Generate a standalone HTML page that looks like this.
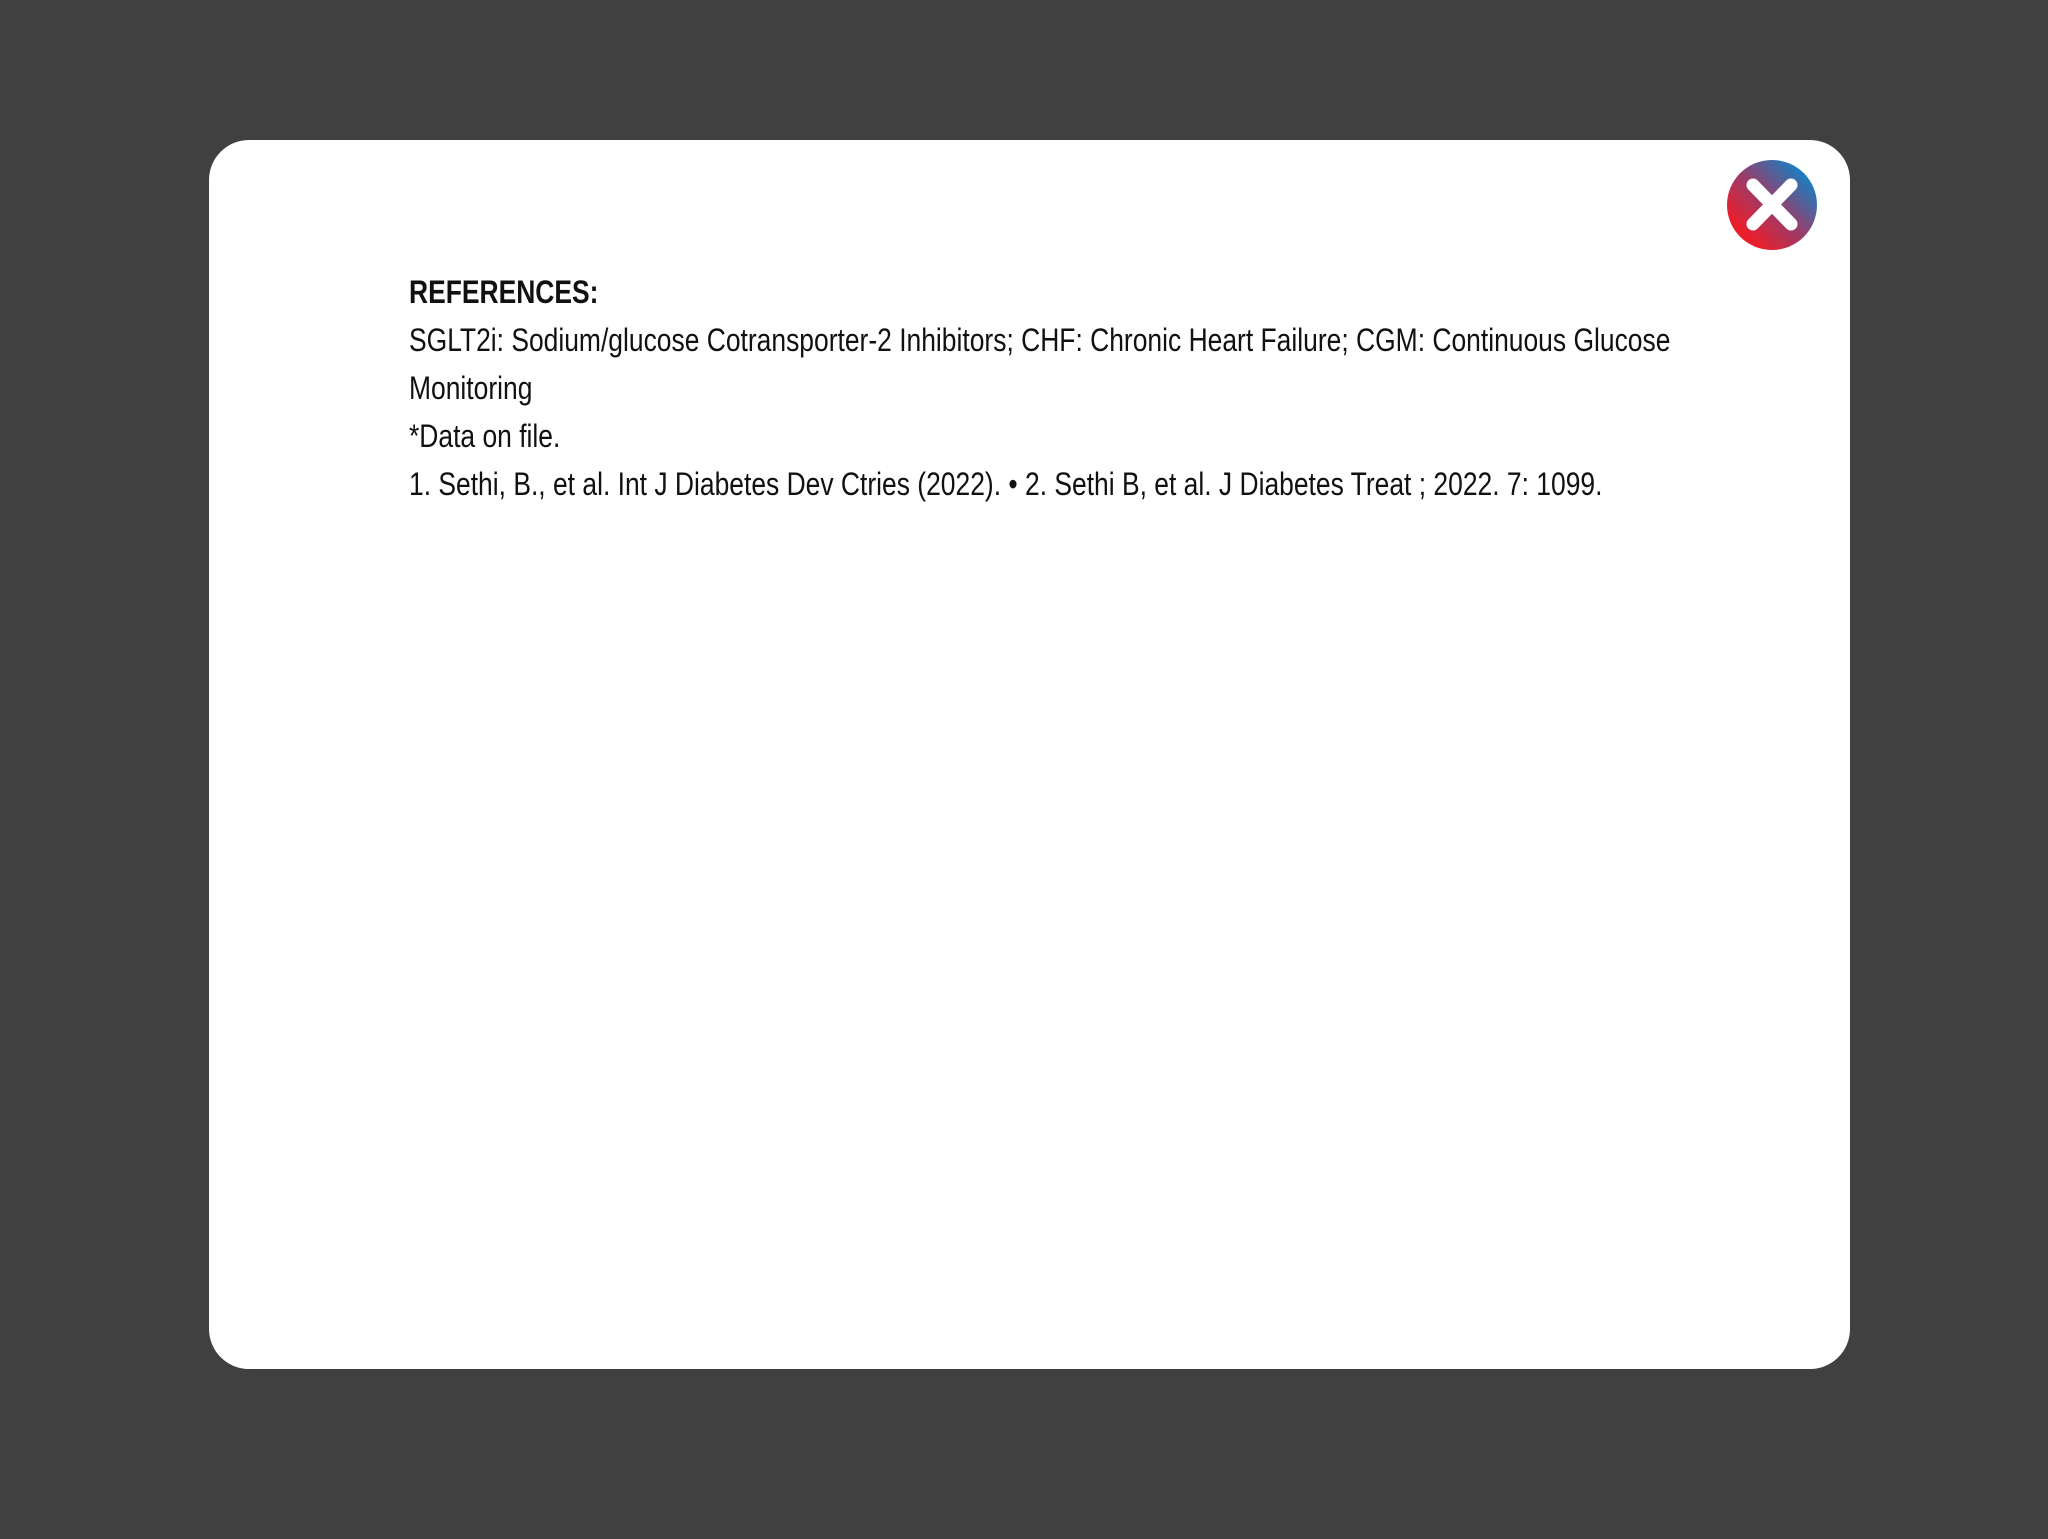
<!DOCTYPE html>
<html><head><meta charset="utf-8"><style>
html,body{margin:0;padding:0;}
body{width:2048px;height:1539px;background:#404040;position:relative;overflow:hidden;font-family:"Liberation Sans Narrow","Liberation Sans",sans-serif;}
.modal{position:absolute;left:209px;top:140px;width:1641px;height:1229px;background:#fff;border-radius:40px;}
.txt{position:absolute;left:409px;top:268px;width:1540px;transform:scaleX(0.826);transform-origin:0 0;font-size:32px;line-height:48px;color:#111;white-space:nowrap;}
.txt b{font-weight:bold;}
svg{position:absolute;left:1726px;top:159px;}
</style></head><body>
<div class="modal"></div>
<div class="txt"><b>REFERENCES:</b><br>SGLT2i: Sodium/glucose Cotransporter-2 Inhibitors; CHF: Chronic Heart Failure; CGM: Continuous Glucose<br>Monitoring<br>*Data on file.<br>1. Sethi, B., et al. Int J Diabetes Dev Ctries (2022). • 2. Sethi B, et al. J Diabetes Treat ; 2022. 7: 1099.</div>
<svg width="92" height="92" viewBox="0 0 92 92"><defs><linearGradient id="g" x1="0" y1="1" x2="1" y2="0"><stop offset="0.2" stop-color="#e8202e"/><stop offset="0.5" stop-color="#9a3c6a"/><stop offset="0.85" stop-color="#1a7ec0"/></linearGradient></defs><circle cx="46" cy="46" r="45" fill="url(#g)"/><path d="M27 26L65 65M65 26L27 65" stroke="#fff" stroke-width="13" stroke-linecap="round"/></svg>
</body></html>
